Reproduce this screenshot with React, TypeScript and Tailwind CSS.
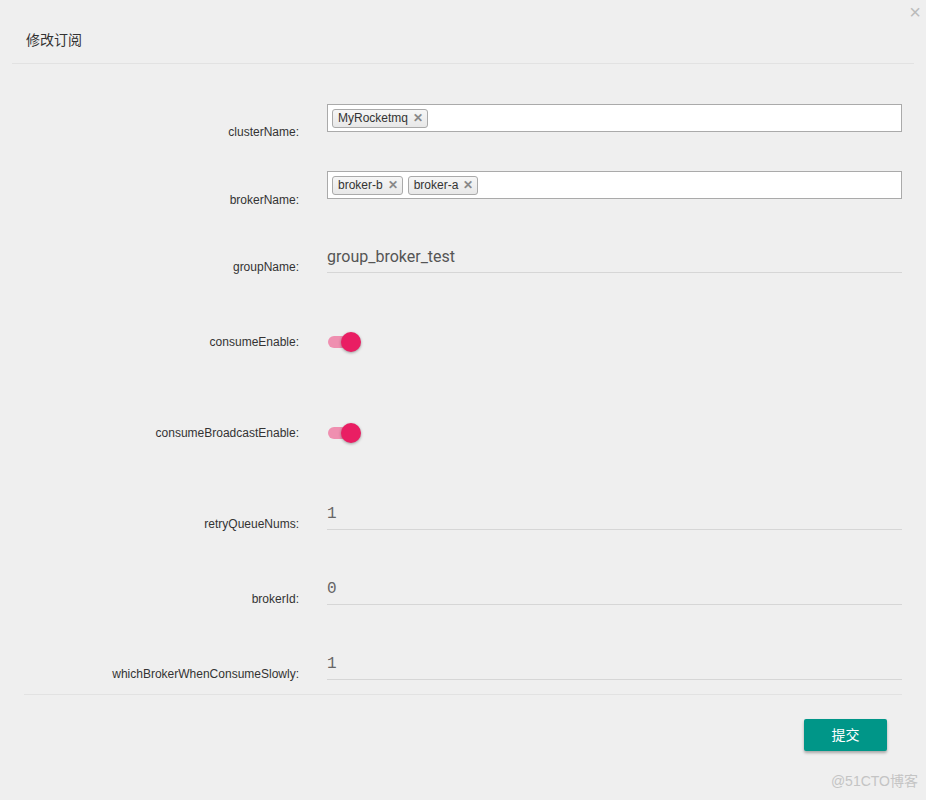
import { ReactNode } from 'react';

interface RowProps {
  label: string;
  rowClass: string;
  labelClass: string;
  ctrlClass: string;
  children: ReactNode;
}

function Row({ label, rowClass, labelClass, ctrlClass, children }: RowProps) {
  return (
    <div className={`flex ${rowClass}`}>
      <div className={`w-[299px] shrink-0 text-right text-[12px] leading-4 text-[#333] ${labelClass}`}>{label}</div>
      <div className={`ml-[28px] w-[575px] ${ctrlClass}`}>{children}</div>
    </div>
  );
}

function Tag({ text }: { text: string }) {
  return (
    <span className="flex h-[19px] items-center rounded-[3px] border border-[#aaa] bg-gradient-to-b from-[#f6f6f6] to-[#e8e8e8] pl-[5px] pr-[4px] text-[12px] text-[#333]">
      {text}
      <span className="ml-[5px] text-[12px] font-bold leading-none text-[#888]">✕</span>
    </span>
  );
}

function TagBox({ tags }: { tags: string[] }) {
  return (
    <div className="flex h-[28px] items-center gap-[5px] border border-[#aaa] bg-white px-[4px]">
      {tags.map((t) => (
        <Tag key={t} text={t} />
      ))}
    </div>
  );
}

function Toggle() {
  return (
    <div className="relative h-[20px] w-[34px]">
      <div className="absolute left-[1px] top-[4px] h-[12px] w-[26px] rounded-full bg-[#ef8fb0]" />
      <div className="absolute left-[14px] top-0 h-[20px] w-[20px] rounded-full bg-[#e91e63] shadow-[0_1px_3px_rgba(0,0,0,0.35)]" />
    </div>
  );
}

function LineInput({ value, mono }: { value: string; mono?: boolean }) {
  return (
    <div
      className={`flex h-[32px] items-center border-b border-[#d6d6d6] ${
        mono
          ? "font-['Liberation_Mono',monospace] text-[16px] text-[#666]"
          : "font-['Roboto',sans-serif] text-[16px] text-[#555]"
      }`}
    >
      {value}
    </div>
  );
}

export default function App() {
  return (
    <div className="relative h-[800px] w-[926px] overflow-hidden bg-[#efefef] font-['Liberation_Sans','Noto_Sans_CJK_SC',sans-serif]">
      <span className="absolute right-[5px] top-[0px] text-[20px] leading-6 text-[#bbb]">×</span>
      <div className="mx-[12px] h-[64px] border-b border-[#e2e2e2] pl-[14px] pt-[30px] text-[14px] leading-5 text-[#333]">
        修改订阅
      </div>

      <div className="flex flex-col">
        <Row label="clusterName:" rowClass="h-[99px]" labelClass="pt-[60px]" ctrlClass="pt-[40px]">
          <TagBox tags={['MyRocketmq']} />
        </Row>
        <Row label="brokerName:" rowClass="h-[67px]" labelClass="pt-[29px]" ctrlClass="pt-[8px]">
          <TagBox tags={['broker-b', 'broker-a']} />
        </Row>
        <Row label="groupName:" rowClass="h-[75px]" labelClass="pt-[29px]" ctrlClass="pt-[11px]">
          <LineInput value="group_broker_test" />
        </Row>
        <Row label="consumeEnable:" rowClass="h-[83px]" labelClass="pt-[29px]" ctrlClass="pt-[27px]">
          <Toggle />
        </Row>
        <Row label="consumeBroadcastEnable:" rowClass="h-[92px]" labelClass="pt-[37px]" ctrlClass="pt-[35px]">
          <Toggle />
        </Row>
        <Row label="retryQueueNums:" rowClass="h-[85px]" labelClass="pt-[36px]" ctrlClass="pt-[18px]">
          <LineInput value="1" mono />
        </Row>
        <Row label="brokerId:" rowClass="h-[75px]" labelClass="pt-[26px]" ctrlClass="pt-[8px]">
          <LineInput value="0" mono />
        </Row>
        <Row label="whichBrokerWhenConsumeSlowly:" rowClass="h-[54px]" labelClass="pt-[26px]" ctrlClass="pt-[8px]">
          <LineInput value="1" mono />
        </Row>
      </div>

      <div className="ml-[24px] w-[878px] border-t border-[#e2e2e2]" />

      <div className="flex justify-end pr-[39px] pt-[24px]">
        <button className="h-[32px] w-[83px] rounded-[2px] bg-[#009688] text-[14px] text-white shadow-[0_2px_3px_rgba(0,0,0,0.3)]">
          提交
        </button>
      </div>

      <span className="absolute bottom-[8px] right-[8px] text-[14px] text-[#c4c4c4]">@51CTO博客</span>
    </div>
  );
}
